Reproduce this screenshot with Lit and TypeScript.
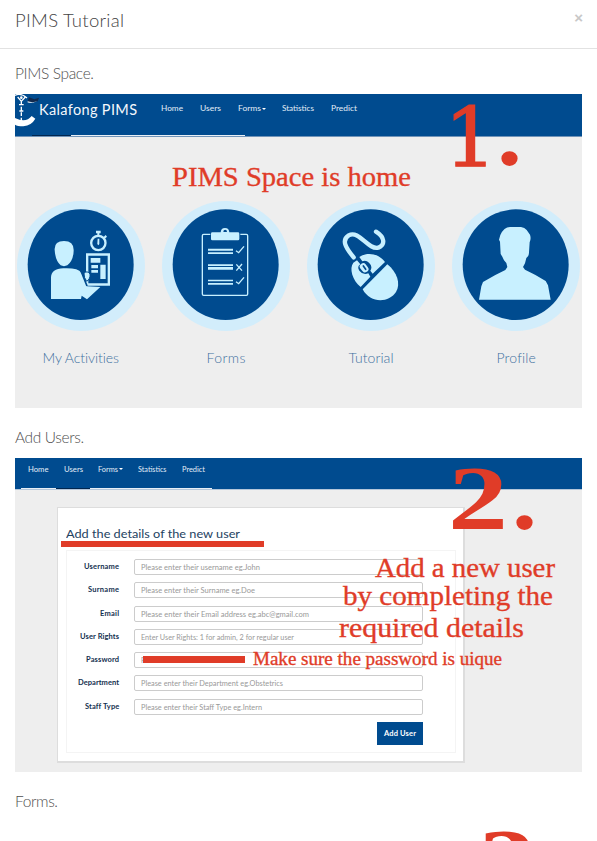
import { LitElement, html, css, svg } from "lit";
import { customElement, property } from "lit/decorators.js";
import { styleMap } from "lit/directives/style-map.js";

/* A single line of text tracked (or stretched) to a given width. */
@customElement("fit-text")
class FitText extends LitElement {
  @property({ type: Number }) w = 0;
  @property({ type: Boolean }) stretch = false;
  static styles = css`
    :host { display: block; white-space: nowrap; }
    .t { display: inline-block; transform-origin: 0 50%; }
  `;
  firstUpdated() {
    const t = this.renderRoot.querySelector(".t") as HTMLElement;
    const n = (this.textContent || "").trim().length;
    const natural = t.getBoundingClientRect().width;
    if (!natural || !this.w) return;
    if (this.stretch) {
      t.style.transform = `scaleX(${this.w / natural})`;
    } else {
      const gap = (this.w - natural) / Math.max(1, n - 1);
      t.style.letterSpacing = `${gap}px`;
      t.style.marginRight = `${-gap}px`;
    }
    this.style.width = `${this.w}px`;
  }
  render() {
    return html`<span class="t"><slot></slot></span>`;
  }
}

const activities = svg`
  <path d="M134 180Q132 153 162 153Q192 153 191 182Q190 212 172 226Q162 231 152 226Q136 212 134 180Z"/>
  <path d="M123 327V262Q124 236 160 235Q204 233 214 248L228 276L231 289L271 291L231 328L215 317L213 327Z"/>
  <path fill-rule="evenodd" d="M228 190H300V287H228ZM235 197V280H293V197Z"/>
  <path d="M213 243L231 288" stroke="#004b8f" stroke-width="5"/>
  <path d="M222 249Q232 241 240 252Q242 266 230 274Q221 263 222 249Z" stroke="#004b8f" stroke-width="3"/>
  <path d="M242 204H271V218H242ZM244 225H264V235H244ZM244 240H264V248H244ZM271 224H287V267H271Z"/>
  <circle cx="265" cy="159" r="21.500" fill="none" stroke="#c8f0ff" stroke-width="7"/>
  <path d="M258 122H272V130H268V138H262V130H258ZM280 142L287 135L291 140L284 147Z"/>
  <path d="M263 146H268V162L265 166L262 162Z"/>`;

const forms = svg`
  <path d="M166 133H146Q142 133 142 137V312Q142 316 146 316H274Q278 316 278 312V137Q278 133 274 133H256" fill="none" stroke="#c8f0ff" stroke-width="4"/>
  <path fill-rule="evenodd" d="M168 131Q168 127 172 127H197Q198 114 210 114Q222 114 223 127H249Q253 127 253 131V147Q253 151 249 151H172Q168 151 168 147ZM205 126H216Q216 119 210.500 119Q205 119 205 126Z"/>
  <path d="M159 176H234V182H159ZM159 187H234V192H159ZM159 223H234V228H159ZM159 231H234V239H159ZM159 269H234V274H159ZM159 279H234V284H159Z"/>
  <path d="M243 182L251 188L267 169M243 275L251 281L267 262M244 223L261 242M261 222L244 242" fill="none" stroke="#c8f0ff" stroke-width="4"/>`;

const mouse = svg`
  <path d="M161 202C136 172 124 150 146 136C178 119 204 181 235 173C257 164 254 141 228 125" fill="none" stroke="#c8f0ff" stroke-width="13" stroke-linecap="round"/>
  <path d="M182 291C157 270 147 235 160 218L171 211L181 223Q170 230 178 242Q190 257 205 250L211 260Z"/>
  <path d="M178 201C203 184 238 192 255 216L218 251L211 242Q219 229 207 218Q198 209 187 214Z"/>
  <path d="M262 223C291 246 303 281 288 306C268 338 211 342 188 298Z"/>
  <rect x="182" y="219" width="20" height="29" rx="9" transform="rotate(-38 192 233)"/>
  <path d="M190 228L197 238" stroke="#004b8f" stroke-width="5" stroke-linecap="round"/>`;

const profile = svg`
  <path d="M102 329L109 289L114 276L151 255L181 240L187 231L184 219L177 211L172 200L167 192L165 155L162 149L166 135Q177 111 196 111H228Q239 112 245 120L255 134Q259 145 254 157L252 187Q252 200 244 204L240 220L234 231L240 239L270 254L302 273L309 286L317 329Z"/>`;

const tiles = [
  { icon: activities, name: "My Activities", w: 77 },
  { icon: forms, name: "Forms", w: 39 },
  { icon: mouse, name: "Tutorial", w: 45 },
  { icon: profile, name: "Profile", w: 39 },
];

const fields = [
  { label: "Username", lw: 35, hint: "Please enter their username eg.John", w: 119 },
  { label: "Surname", lw: 31, hint: "Please enter their Surname eg.Doe", w: 114 },
  { label: "Email", lw: 19, hint: "Please enter their Email address eg.abc@gmail.com", w: 168 },
  { label: "User Rights", lw: 39, hint: "Enter User Rights: 1 for admin, 2 for regular user", w: 153 },
  { label: "Password", lw: 33, hint: "P", w: 4 },
  { label: "Department", lw: 41, hint: "Please enter their Department eg.Obstetrics", w: 142 },
  { label: "Staff Type", lw: 34, hint: "Please enter their Staff Type eg.Intern", w: 121 },
];

const navItems = ["Home", "Users", "Forms", "Statistics", "Predict"];

@customElement("app-root")
class AppRoot extends LitElement {
  static styles = css`
    :host { display: block; height: 841px; overflow: hidden; background: #fff;
      font-family: Lato, "Open Sans", sans-serif; font-weight: 300; color: #444; }
    * { box-sizing: border-box; }
    header { height: 49px; border-bottom: 1px solid #e2e2e2; padding: 8px 14px 0 15px;
      display: flex; justify-content: space-between; }
    .title { font-size: 18.500px; line-height: 24px; }
    .close { font: bold 15px/20px "Liberation Sans", sans-serif; color: #c8c8c8; }
    main { padding: 0 15px; }
    h4 { margin: 0; height: 45px; padding-top: 14px; font-size: 15.500px; line-height: 20px; font-weight: 300; color: #505050; }
    figure { margin: 0 0 5px; height: 314px; background: #eee; position: relative; overflow: hidden; }
    .bar { background: #004b8f; color: #e3edf7; display: flex; font-weight: 400; font-size: 7.500px; line-height: 10px; }
    .bar1 { height: 43px; border-bottom: 1px solid #7093b8; }
    .bar2 { height: 32px; border-bottom: 1px solid #b4c6da; padding-left: 13px; }
    .logo { width: 24px; height: 33px; flex: none; }
    .brand { font-size: 14.500px; line-height: 18px; margin-top: 7px; width: 122px; color: #f4f8fc; }
    .item { display: flex; align-items: center; height: 10px; }
    .bar1 .item { margin-top: 10px; }
    .bar2 .item { margin-top: 6px; font-size: 7px; }
    .caret { border: 2px solid transparent; border-top-color: #fff; border-bottom: 0; margin-left: 1px; }
    .rule { display: flex; height: 1px; margin-top: -2px; position: relative; }
    .rule i { background: #e8eff6; }
    .rule .dark { background: #00264f; }
    .rule1 { padding-left: 17px; }
    .rule2 { padding-left: 6px; }
    .tiles { display: grid; grid-template-columns: repeat(4, 145px); margin: 54px 0 0 -5px; }
    .tile { display: flex; flex-direction: column; align-items: center; color: #41709f; font-size: 14px; line-height: 18px; }
    .tile svg { width: 145px; height: 145px; display: block; }
    .tile fit-text { margin: 14px 0 0 -3px; }
    .note { position: absolute; color: #e03c28; font-family: "Liberation Serif", serif; font-weight: 400; line-height: 1.2;
      -webkit-text-stroke: 0.35px #e03c28; }
    .big { font-size: 91px; font-weight: 700; line-height: 0.8; -webkit-text-stroke: 0; }
    .one { font-family: "DejaVu Serif", serif; font-weight: 400; font-size: 83px; line-height: 0.8; -webkit-text-stroke: 1.2px #e03c28; }
    .mark { position: absolute; background: #e03c28; }
    .panel { margin: 18px 0 0 42px; width: 408px; height: 256px; background: #fff; border: 1px solid #ddd;
      border-width: 1px 2px 2px 1px; padding: 17px 7px 0 8px; }
    .ptitle { font-size: 12px; line-height: 18px; color: #24425f; height: 25px; font-weight: 400; }
    .form { border: 1px solid #f4f4f4; height: 203px; padding: 8px 32px 0 0; }
    .row { display: flex; justify-content: flex-end; align-items: center; height: 16px; margin-bottom: 7.250px; }
    .row .lab { font-weight: 700; font-size: 7.500px; line-height: 10px; color: #14304f; margin-right: 15px; }
    .input { width: 289px; height: 16px; border: 1px solid #ccc; border-radius: 2px; padding: 1px 6px;
      font-size: 7.200px; line-height: 13px; color: #999; font-weight: 400; background: #fff; }
    .btn { margin: 0 0 0 auto; width: 46px; height: 23px; background: #004b8f; color: #fff; font-weight: 700;
      font-size: 7.500px; line-height: 23px; padding-left: 7px; }
  `;

  nav(widths: number[], gaps: number[]) {
    return navItems.map(
      (n, i) => html`<div class="item" style=${styleMap({ marginLeft: gaps[i] + "px" })}>
        <fit-text stretch w=${widths[i]}>${n}</fit-text>${n === "Forms" ? html`<i class="caret"></i>` : ""}
      </div>`
    );
  }

  note(x: number, y: number, size: number, w: number, text: string) {
    return html`<fit-text class="note" stretch w=${w}
      style=${styleMap({ left: x + "px", top: y - size * 0.9375 + "px", fontSize: size + "px" })}>${text}</fit-text>`;
  }

  big(x: number, y: number, w: number, text: string) {
    return html`<fit-text class="note big" stretch w=${w}
      style=${styleMap({ left: x + "px", top: y - 67 + "px" })}>${text}</fit-text>`;
  }

  mark(x: number, y: number, w: number, h: number) {
    return html`<div class="mark" style=${styleMap({ left: x + "px", top: y + "px", width: w + "px", height: h + "px" })}></div>`;
  }

  render() {
    return html`
      <header>
        <fit-text class="title" w="109">PIMS Tutorial</fit-text>
        <span class="close">×</span>
      </header>
      <main>
        <section>
          <h4><fit-text w="79">PIMS Space.</fit-text></h4>
          <figure>
            <div class="bar bar1">
              <svg class="logo" viewBox="0 0 72 99">
                <path d="M0 72Q33 88 50 66L61 74Q50 94 25 97Q7 97 0 92Z" fill="#fff"/>
                <path d="M0 4Q18-4 36 12M38 23Q50 27 64 20" fill="none" stroke="#fff" stroke-width="4"/>
                <path d="M42 10L58 16L72 11L68 22L53 25L38 22Z" fill="#10294d"/>
                <path d="M8 9L19 22L31 9M19 21V32M19 38V50M19 55V66M19 71V81M12 32H26M13 51H25" fill="none" stroke="#fff" stroke-width="4"/>
                <circle cx="19" cy="11" r="4" fill="#fff"/>
              </svg>
              <fit-text class="brand" w="98">Kalafong PIMS</fit-text>
              ${this.nav([22, 21, 23, 32, 26], [23.5, 17, 17, 16.5, 17])}
            </div>
            <div class="rule rule1">
              <i class="dark" style="width:39px"></i><i style="width:174px"></i>
            </div>
            <div class="tiles">
              ${tiles.map(
                (t) => html`<div class="tile">
                  <svg viewBox="0 0 435 435" fill="#c8f0ff">
                    <ellipse cx="213" cy="228" rx="192" ry="195" fill="#d2edfb"/>
                    <ellipse cx="212" cy="224" rx="159" ry="166" fill="#004b8f"/>
                    ${t.icon}
                  </svg>
                  <fit-text w=${t.w}>${t.name}</fit-text>
                </div>`
              )}
            </div>
            ${this.note(157, 92, 28, 239, "PIMS Space is home")}
            <fit-text class="note one" stretch w="53" style="left:429px;top:11.5px">1</fit-text>
            ${this.big(482, 72, 25, ".")}
          </figure>
        </section>
        <section>
          <h4><fit-text w="69">Add Users.</fit-text></h4>
          <figure>
            <div class="bar bar2">${this.nav([20.5, 19, 20, 28.5, 23], [0, 15.5, 15, 15, 15.5])}</div>
            <div class="rule rule2">
              <i style="width:35px"></i><i class="dark" style="width:34px"></i><i style="width:122px"></i>
            </div>
            <div class="panel">
              <fit-text class="ptitle" stretch w="174">Add the details of the new user</fit-text>
              <div class="form">
                ${fields.map(
                  (f) => html`<div class="row">
                    <fit-text class="lab" w=${f.lw}>${f.label}</fit-text>
                    <div class="input"><fit-text stretch w=${f.w}>${f.hint}</fit-text></div>
                  </div>`
                )}
                <div class="btn"><fit-text w="32">Add User</fit-text></div>
              </div>
            </div>
            ${this.mark(46, 83, 203, 6)} ${this.mark(128, 198, 102, 7)}
            ${this.big(433, 72, 60, "2")}
            ${this.big(497, 72, 25, ".")}
            ${this.note(360, 119, 28, 180, "Add a new user")}
            ${this.note(328, 147, 28, 210, "by completing the")}
            ${this.note(324, 179, 28, 185, "required details")}
            ${this.note(238, 207, 18.5, 249, "Make sure the password is uique")}
          </figure>
        </section>
        <section>
          <h4><fit-text w="43">Forms.</fit-text></h4>
          <figure style="background:#fff">${this.big(464, 71, 57, "3")}</figure>
        </section>
      </main>
    `;
  }
}
